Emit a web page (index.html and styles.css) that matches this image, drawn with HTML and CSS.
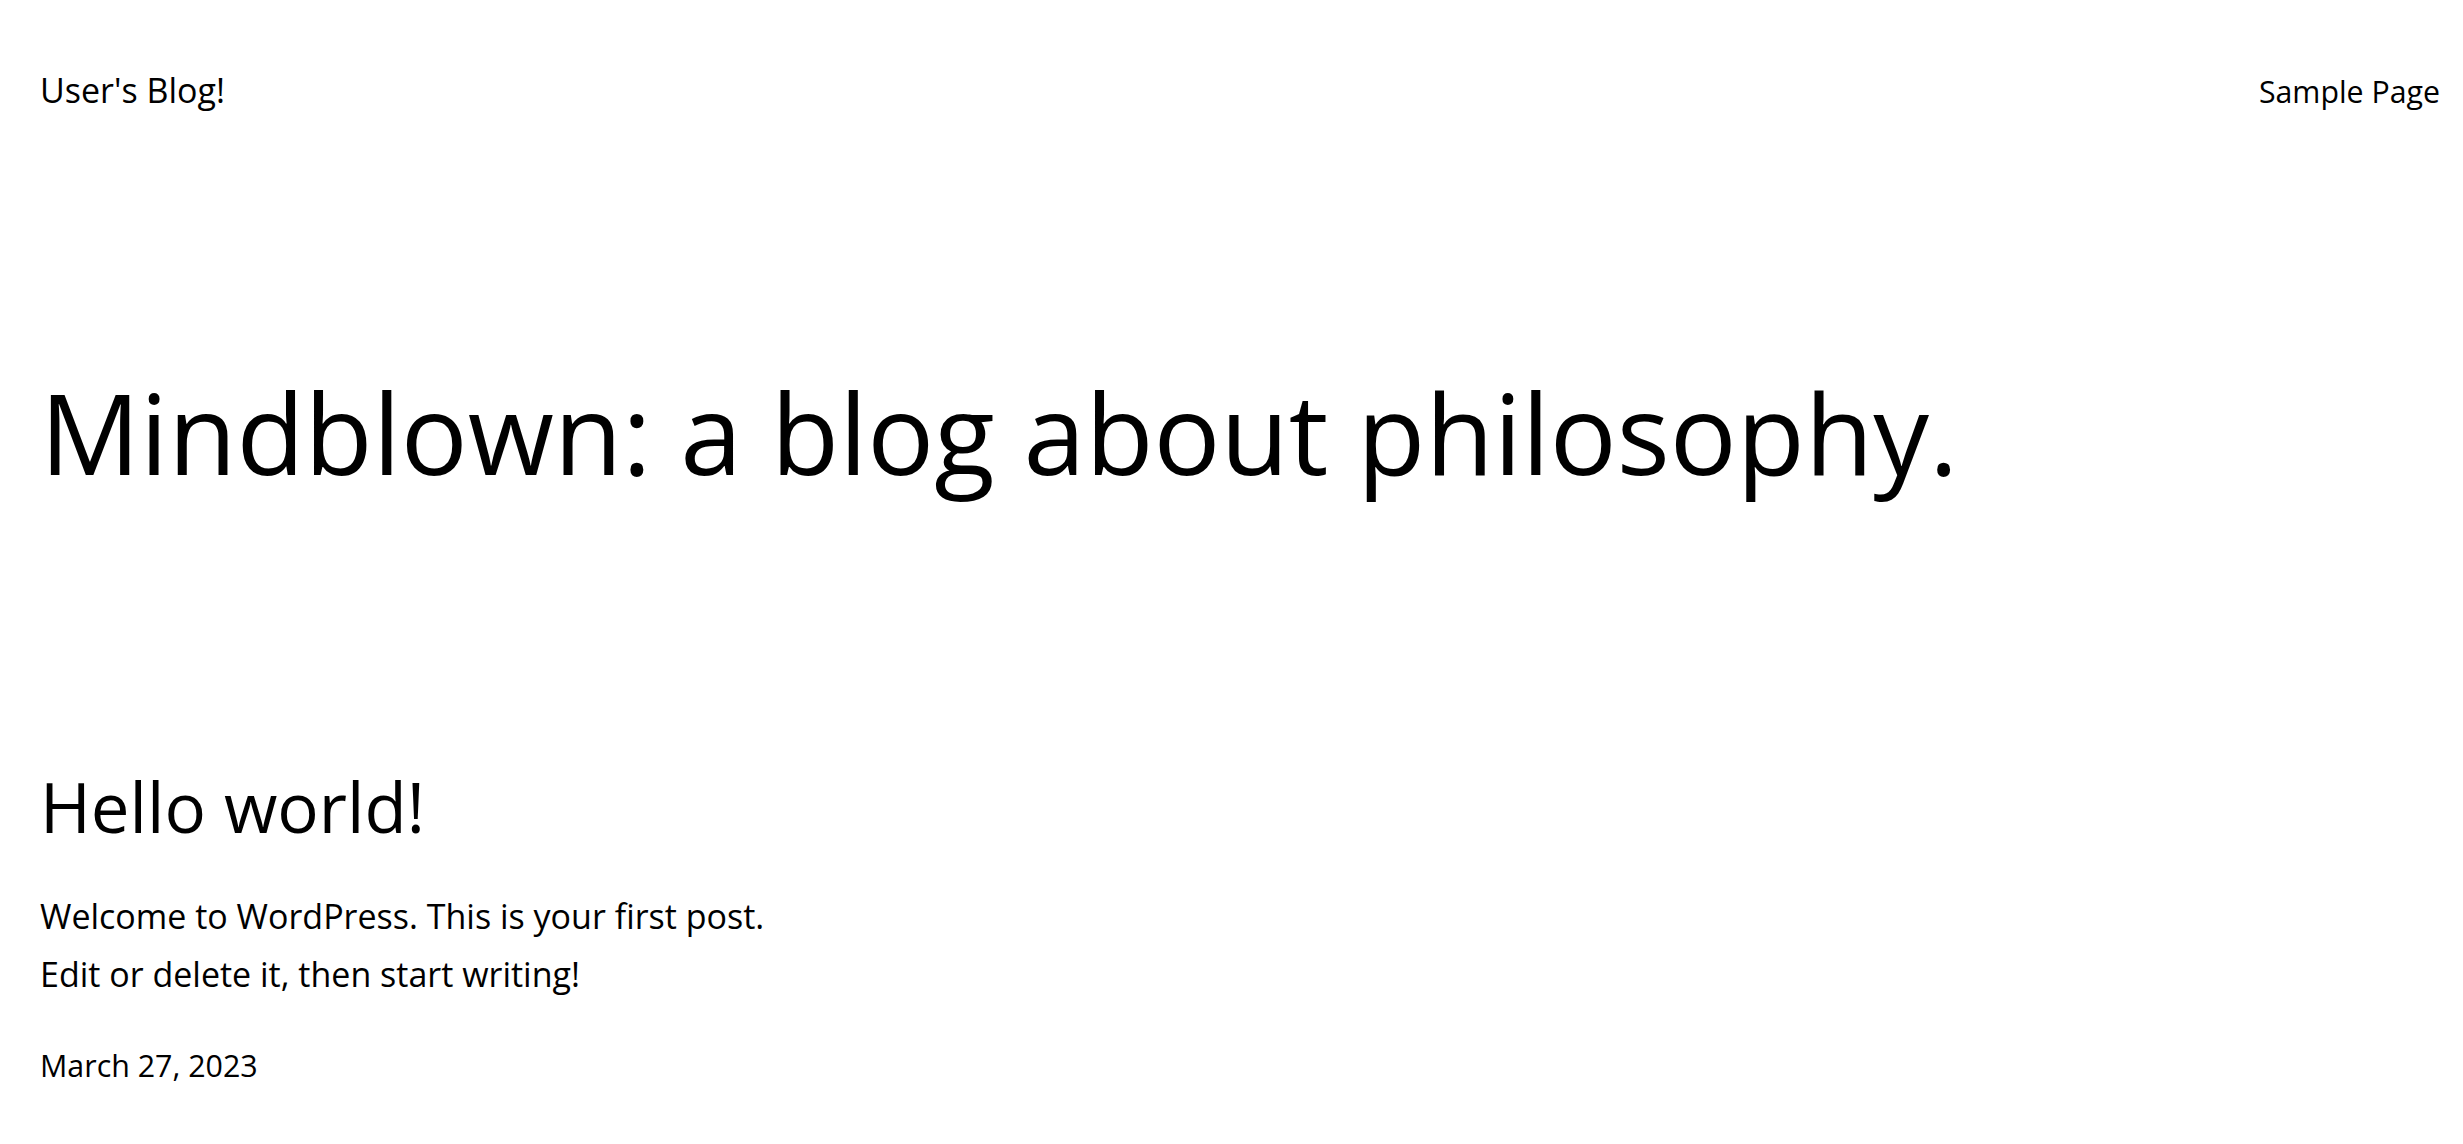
FILE: index.html
```html
<!DOCTYPE html>
<html lang="en">
<head>
<meta charset="utf-8">
<title>User's Blog!</title>
<link rel="stylesheet" href="styles.css">
</head>
<body>
<header class="site-header">
  <a class="site-title" href="#">User's Blog!</a>
  <nav class="site-nav">
    <a href="#">Sample Page</a>
  </nav>
</header>
<main class="site-main">
  <h1 class="tagline">Mindblown: a blog about philosophy.</h1>
  <article class="post">
    <h2 class="post-title"><a href="#">Hello world!</a></h2>
    <p class="post-excerpt">Welcome to WordPress. This is your first post. Edit or delete it, then start writing!</p>
    <time class="post-date" datetime="2023-03-27">March 27, 2023</time>
  </article>
</main>
</body>
</html>
```

FILE: styles.css
```css
html, body {
  margin: 0;
  padding: 0;
  background: #ffffff;
  color: #000000;
}

body {
  font-family: "Open Sans", "Noto Sans", sans-serif;
  font-size: 33px;
  line-height: 1.6;
}

a {
  color: inherit;
  text-decoration: none;
}

.site-header {
  display: flex;
  justify-content: space-between;
  align-items: baseline;
  padding: 64px 23px 0 40px;
}

.site-title {
  font-size: 34px;
  line-height: 52.8px;
}

.site-nav a {
  font-size: 30.3px;
  line-height: 52.8px;
}

.site-main {
  padding: 0 23px 0 40px;
}

.tagline {
  margin: 245px 0 0 0;
  font-size: 111.3px;
  font-weight: 400;
  line-height: 136.8px;
}

.post {
  display: flex;
  flex-direction: column;
  align-items: flex-start;
  padding-top: 265.5px;
}

.post-title {
  margin: 0;
  font-size: 69px;
  font-weight: 400;
  line-height: 81.6px;
}

.post-excerpt {
  margin: 39px 0 0 0;
  max-width: 770px;
  font-size: 34px;
  line-height: 58.7px;
}

.post-date {
  margin-top: 36.3px;
  font-size: 30.4px;
  line-height: 52.8px;
}
```
